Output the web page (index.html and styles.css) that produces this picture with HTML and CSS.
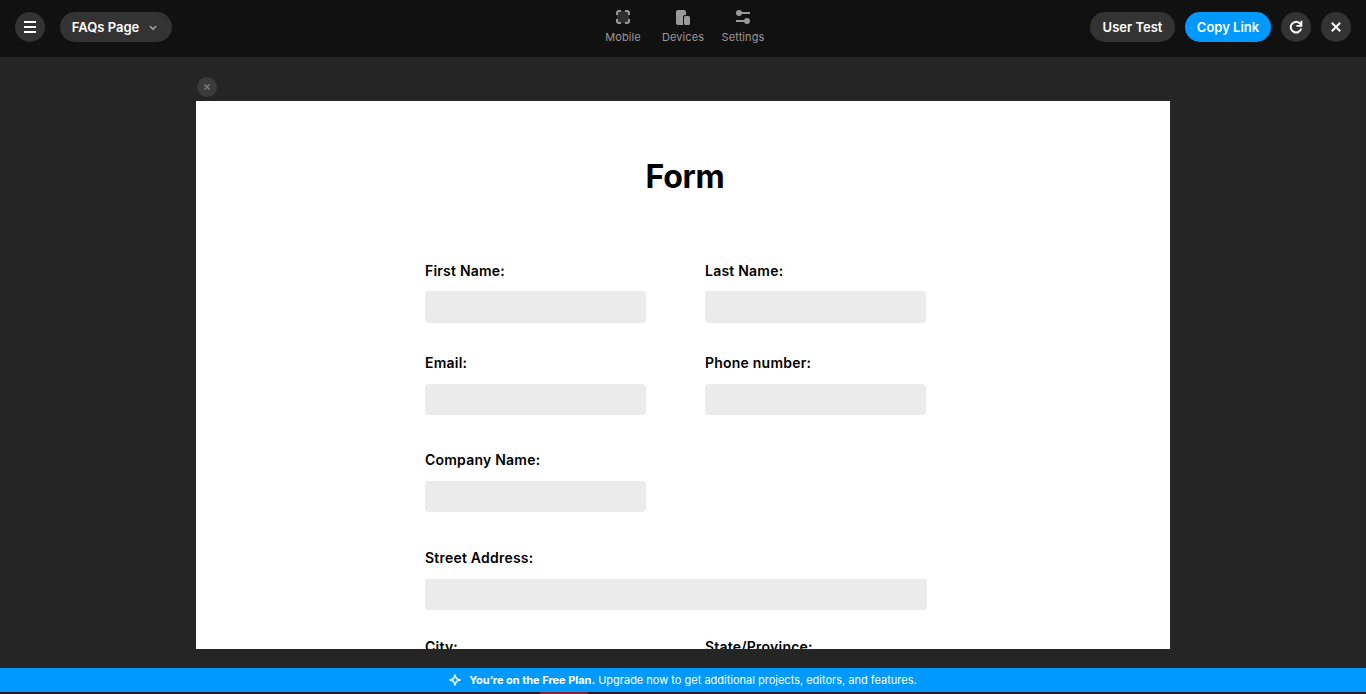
FILE: index.html
```html
<!DOCTYPE html>
<html lang="en">
<head>
<meta charset="utf-8">
<title>FAQs Page</title>
<link rel="stylesheet" href="styles.css">
</head>
<body>
<header class="toolbar">
  <div class="side">
    <button class="round" aria-label="Menu"><svg width="12" height="12" viewBox="0 0 12 12"><path d="M0 1h12M0 6h12M0 11h12" stroke="#fff" stroke-width="2"/></svg></button>
    <button class="pill page-select">FAQs Page<svg class="chevron" width="8" height="6" viewBox="0 0 8 6"><path d="M.8 1 4 4.2 7.2 1" fill="none" stroke="#999" stroke-width="1.7"/></svg></button>
  </div>
  <nav class="tools">
    <a class="tool"><svg width="14" height="14" viewBox="0 0 14 14"><rect x="1" y="1" width="12" height="12" rx="2" fill="#2f2f2f"/><path d="M1 5V3a2 2 0 0 1 2-2h2M9 1h2a2 2 0 0 1 2 2v2M13 9v2a2 2 0 0 1-2 2H9M5 13H3a2 2 0 0 1-2-2V9" fill="none" stroke="#999" stroke-width="2"/></svg>Mobile</a>
    <a class="tool"><svg width="14" height="15" viewBox="0 0 14 15"><path d="M2 0h6a2 2 0 0 1 2 2v3H9a2 2 0 0 0-2 2v8H2a2 2 0 0 1-2-2V2a2 2 0 0 1 2-2z" fill="#999"/><rect x="8" y="6" width="6" height="9" rx="1.5" fill="#999"/></svg>Devices</a>
    <a class="tool"><svg width="14" height="14" viewBox="0 0 14 14"><path d="M3 3h11M0 11h11" stroke="#999" stroke-width="2"/><circle cx="3" cy="3" r="3" fill="#999"/><circle cx="11" cy="11" r="3" fill="#999"/></svg>Settings</a>
  </nav>
  <div class="side side-end">
    <button class="pill user-test">User Test</button>
    <button class="pill copy-link">Copy Link</button>
    <button class="round" aria-label="Reload"><svg width="14" height="14" viewBox="0 0 14 14"><path d="M12.2 8.6A5.3 5.3 0 1 1 10.6 3.2L12 4.8" fill="none" stroke="#fff" stroke-width="2"/><path d="M12.4.8v5.1H7.4" fill="none" stroke="#fff" stroke-width="1.8"/></svg></button>
    <button class="round" aria-label="Close"><svg width="10" height="10" viewBox="0 0 10 10"><path d="m.8.8 8.4 8.4M9.2.8.8 9.2" stroke="#fff" stroke-width="2"/></svg></button>
  </div>
</header>
<main class="stage">
  <button class="dismiss" aria-label="Close preview"><svg width="6" height="6" viewBox="0 0 6 6"><path d="m.3.3 5.4 5.4M5.7.3.3 5.7" stroke="#777" stroke-width="1.5"/></svg></button>
  <section class="preview">
    <h1 class="title">Form</h1>
    <form class="form">
      <label class="field">First Name:<span class="input tall"></span></label>
      <label class="field">Last Name:<span class="input tall"></span></label>
      <label class="field">Email:<span class="input"></span></label>
      <label class="field">Phone number:<span class="input"></span></label>
      <label class="field lone">Company Name:<span class="input"></span></label>
      <label class="field wide">Street Address:<span class="input"></span></label>
      <label class="field">City:<span class="input"></span></label>
      <label class="field">State/Province:<span class="input"></span></label>
    </form>
  </section>
</main>
<footer class="banner">
  <svg width="12" height="12" viewBox="0 0 12 12"><path d="M6 1 7.4 4.6 11 6 7.4 7.4 6 11 4.6 7.4 1 6l3.6-1.4z" fill="none" stroke="#fff" stroke-width="1.4" stroke-linejoin="round"/></svg>
  <p class="notice"><strong class="plan">You’re on the Free Plan.</strong> <span class="upgrade">Upgrade now to get additional projects, editors, and features.</span></p>
</footer>
<div class="strip"><div class="strip-mark"></div></div>
</body>
</html>
```
FILE: styles.css
```css
* { box-sizing: border-box; }
body {
  margin: 0;
  height: 694px;
  display: flex;
  flex-direction: column;
  overflow: hidden;
  background: #252525;
  font-family: Inter, "Liberation Sans", sans-serif;
}
button { border: 0; padding: 0; font: inherit; color: inherit; }
svg { display: block; flex: none; }

.toolbar {
  flex: none;
  height: 57px;
  padding: 0 15px;
  display: grid;
  grid-template-columns: 1fr 180px 1fr;
  background: #111;
  color: #fff;
}
.side { display: flex; gap: 15px; padding-top: 12px; }
.side-end { justify-content: flex-end; gap: 10px; }
.round, .pill {
  display: flex;
  align-items: center;
  justify-content: center;
  height: 30px;
  border-radius: 15px;
  background: #333;
}
.round { width: 30px; }
.pill { font-size: 13px; font-weight: 600; white-space: nowrap; }
.page-select { width: 112px; padding-right: 3px; }
.chevron { margin: 2px 0 0 10px; }
.user-test { width: 85px; }
.copy-link { width: 86px; background: #09f; }
.tools { display: grid; grid-template-columns: repeat(3, 60px); padding-top: 10px; }
.tool {
  display: grid;
  grid-template-rows: 20px 14px;
  justify-items: center;
  align-content: start;
  font-size: 11px;
  line-height: 14px;
  letter-spacing: .1px;
  color: #999;
}

.stage { flex: none; height: 611px; padding: 20px 196px 19px; }
.dismiss {
  display: flex;
  align-items: center;
  justify-content: center;
  width: 20px;
  height: 20px;
  margin: 0 0 4px 1px;
  border-radius: 50%;
  background: #3b3b3b;
}
.preview { height: 548px; width: 974px; overflow: hidden; background: #fff; color: #000; }
.title {
  margin: 0;
  padding: 56px 0 0 4px;
  font-size: 32px;
  font-weight: 700;
  font-optical-sizing: none;
  letter-spacing: -.3px;
  line-height: 40px;
  text-align: center;
}
.form {
  display: grid;
  grid-template-columns: 221px 221px;
  grid-template-rows: 92px 97px 98px 89px 62px;
  column-gap: 59px;
  margin: 64px 0 0 229px;
}
.field { font-size: 14px; font-weight: 600; line-height: 20px; letter-spacing: .22px; }
.input { display: block; height: 31px; margin-top: 11px; border-radius: 4px; background: #ebebeb; }
.tall { height: 32px; margin-top: 10px; }
.lone { grid-column: 1; grid-row: 3; }
.wide { grid-column: 1 / -1; width: 502px; }

.banner {
  flex: none;
  height: 24px;
  display: flex;
  align-items: center;
  justify-content: center;
  gap: 8px;
  background: #09f;
  color: #fff;
}
.notice { margin: 0; font-size: 11px; line-height: 14px; white-space: nowrap; }
.plan { font-weight: 700; letter-spacing: -.03px; }
.strip { flex: none; height: 2px; padding-left: 540px; background: #30161b; }
.strip-mark { width: 48px; height: 2px; background: #8f2029; }
```
